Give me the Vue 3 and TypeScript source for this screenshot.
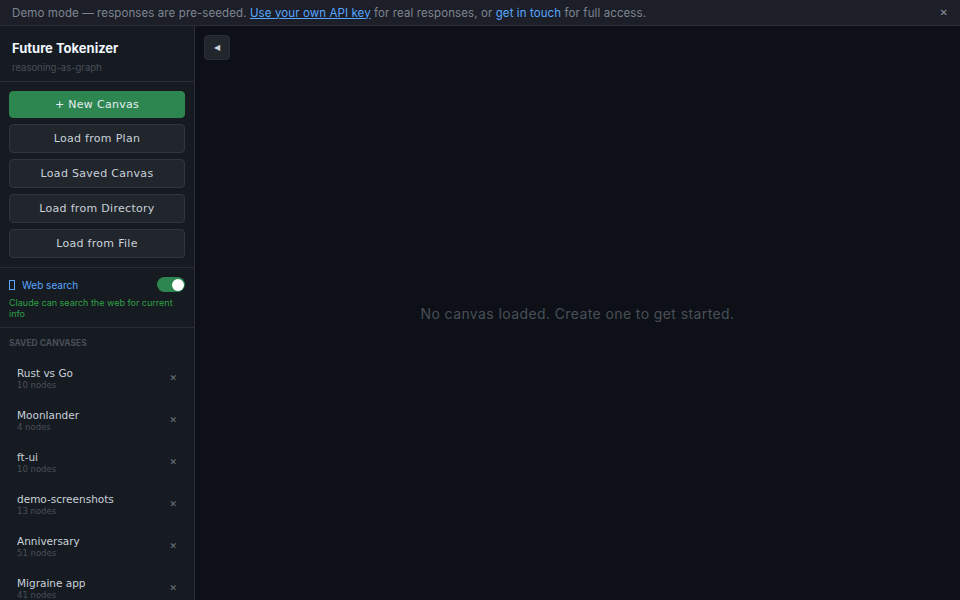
<template>
  <div class="app">
    <div class="banner">
      <span class="banner-text">
        Demo mode — responses are pre-seeded.
        <a class="link underline" href="#">Use your own API key</a>
        for real responses, or
        <a class="link" href="#">get in touch</a>
        for full access.
      </span>
      <button class="banner-close">✕</button>
    </div>

    <div class="main">
      <aside class="sidebar">
        <div class="brand">
          <div class="brand-title">Future Tokenizer</div>
          <div class="brand-sub">reasoning-as-graph</div>
        </div>

        <div class="actions">
          <button class="btn btn-primary">+ New Canvas</button>
          <button v-for="a in actions" :key="a" class="btn">{{ a }}</button>
        </div>

        <div class="search">
          <div class="search-row">
            <span class="search-label">
              <span class="missing-glyph" />
              Web search
            </span>
            <span class="toggle"><span class="knob" /></span>
          </div>
          <div class="search-hint">Claude can search the web for current info</div>
        </div>

        <div class="saved">
          <div class="saved-title">SAVED CANVASES</div>
          <div v-for="c in canvases" :key="c.name" class="saved-item">
            <div>
              <div class="saved-name">{{ c.name }}</div>
              <div class="saved-count">{{ c.nodes }} nodes</div>
            </div>
            <span class="saved-remove">✕</span>
          </div>
        </div>
      </aside>

      <main class="canvas">
        <button class="collapse">◀</button>
        <div class="empty">No canvas loaded. Create one to get started.</div>
      </main>
    </div>
  </div>
</template>

<script setup lang="ts">
const actions = ['Load from Plan', 'Load Saved Canvas', 'Load from Directory', 'Load from File']

const canvases = [
  { name: 'Rust vs Go', nodes: 10 },
  { name: 'Moonlander', nodes: 4 },
  { name: 'ft-ui', nodes: 10 },
  { name: 'demo-screenshots', nodes: 13 },
  { name: 'Anniversary', nodes: 51 },
  { name: 'Migraine app', nodes: 41 },
]
</script>

<style>
html, body { margin: 0; background: #0d1117; overflow: hidden; }
</style>

<style scoped>
.app {
  width: 960px;
  height: 600px;
  display: flex;
  flex-direction: column;
  overflow: hidden;
  font-family: Inter, sans-serif;
  background: #0d1117;
}

/* banner */
.banner {
  height: 25px;
  flex: none;
  display: flex;
  align-items: center;
  justify-content: space-between;
  padding: 0 12px;
  background: #1c1f28;
  border-bottom: 1px solid #2a2d36;
}
.banner-text {
  font-size: 11.5px;
  letter-spacing: 0.1px;
  color: #7d8590;
  white-space: nowrap;
}
.link { color: #58a6ff; text-decoration: none; }
.link.underline { text-decoration: underline; }
.banner-close {
  border: none;
  background: none;
  padding: 0;
  color: #8b949e;
  font-size: 10px;
  font-family: "DejaVu Sans", sans-serif;
  margin-right: 0;
}

.main { flex: 1; display: flex; min-height: 0; }

/* sidebar */
.sidebar {
  width: 194px;
  flex: none;
  background: #161b22;
  border-right: 1px solid #2a2d36;
  display: flex;
  flex-direction: column;
  overflow: hidden;
}
.brand {
  height: 56px;
  flex: none;
  padding: 14px 12px 0;
  box-sizing: border-box;
  border-bottom: 1px solid #2a2d36;
}
.brand-title { font-size: 13px; font-weight: 700; color: #f0f6fc; line-height: 16px; }
.brand-sub { font-size: 9.5px; color: #484f58; margin-top: 6px; line-height: 12px; }

.actions {
  flex: none;
  display: flex;
  flex-direction: column;
  gap: 6px;
  padding: 9px;
  border-bottom: 1px solid #2a2d36;
}
.btn {
  height: 29px;
  padding: 0;
  border: 1px solid #30363d;
  border-radius: 4px;
  background: #21262d;
  color: #c9d1d9;
  font-family: "DejaVu Sans", sans-serif;
  font-size: 11px;
  letter-spacing: 0.3px;
}
.btn-primary {
  height: 27px;
  background: #2d8650;
  border-color: #2d8650;
  color: #e6edf3;
}

.search {
  flex: none;
  padding: 9px 9px 8px;
  border-bottom: 1px solid #2a2d36;
}
.search-row { display: flex; align-items: center; justify-content: space-between; }
.search-label {
  display: flex;
  align-items: center;
  gap: 7px;
  font-size: 10px;
  color: #58a6ff;
}
.missing-glyph {
  width: 4px;
  height: 8px;
  border: 1px solid #58a6ff;
}
.toggle {
  width: 27px;
  height: 15px;
  border-radius: 8px;
  background: #2d8650;
  display: flex;
  align-items: center;
  justify-content: flex-end;
  padding-right: 1px;
}
.knob { width: 12px; height: 12px; border-radius: 50%; background: #fff; }
.search-hint {
  margin-top: 5px;
  font-size: 9px;
  line-height: 11px;
  color: #2ea043;
}

.saved { padding: 9px; flex: 1; }
.saved-title {
  font-size: 8.5px;
  font-weight: 700;
  color: #484f58;
  line-height: 12px;
  margin-bottom: 8px;
}
.saved-item {
  height: 42px;
  display: flex;
  align-items: center;
  justify-content: space-between;
  padding: 0 8px;
  box-sizing: border-box;
}
.saved-name {
  font-family: "DejaVu Sans", sans-serif;
  font-size: 10.5px;
  line-height: 14px;
  color: #c9d1d9;
}
.saved-count {
  font-family: "DejaVu Sans", sans-serif;
  font-size: 8.5px;
  line-height: 10px;
  color: #484f58;
}
.saved-remove {
  color: #6e7681;
  font-size: 9px;
  font-family: "DejaVu Sans", sans-serif;
}

/* canvas */
.canvas {
  flex: 1;
  position: relative;
  display: flex;
  align-items: center;
  justify-content: center;
  background: #0d1117;
}
.collapse {
  position: absolute;
  top: 9px;
  left: 9px;
  width: 26px;
  height: 25px;
  padding: 0;
  border: 1px solid #2a2d36;
  border-radius: 4px;
  background: #21262d;
  color: #c9d1d9;
  font-size: 8px;
  font-family: "DejaVu Sans", sans-serif;
}
.empty {
  font-size: 14px;
  letter-spacing: 0.4px;
  color: #484f58;
}
</style>
